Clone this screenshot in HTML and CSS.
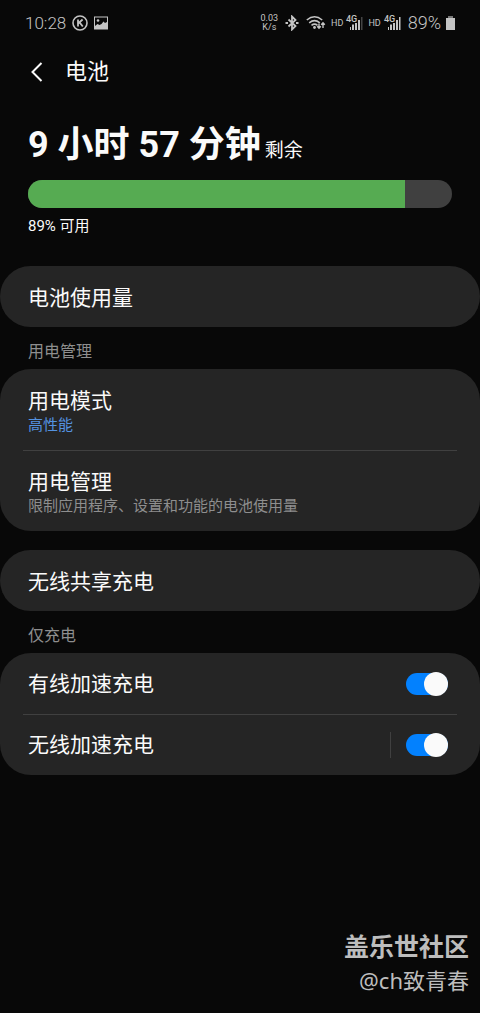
FILE: index.html
```html
<!DOCTYPE html>
<html lang="zh-CN">
<head>
<meta charset="utf-8">
<meta name="viewport" content="width=device-width, initial-scale=1">
<title>电池</title>
<link rel="stylesheet" href="styles.css">
</head>
<body>
<div class="screen">
  <div class="status">
    <div class="status-side">
      <span class="status-text">10:28</span>
      <svg class="icon-k" viewBox="0 0 16 16" aria-hidden="true"><circle cx="8" cy="8" r="7" fill="none" stroke="currentColor" stroke-width="1.6"/><path d="M6 4.5v7M10.6 4.5 6.4 8.2M7.5 7.4l3.3 4.1" fill="none" stroke="currentColor" stroke-width="1.8"/></svg>
      <svg class="icon-image" viewBox="0 0 14 14" aria-hidden="true"><path fill="currentColor" fill-rule="evenodd" d="M0 .5h14v13H0zM1 1.500v8.500l2.500-2 2 1 2-1 2-2.500 1.500 1.500 2-1V1.500z"/><circle cx="4" cy="4.500" r="1.300" fill="currentColor"/></svg>
    </div>
    <div class="status-side indicators">
      <span class="speed"><span>0.03</span><span>K/s</span></span>
      <svg class="icon-bt" viewBox="0 0 14 16" aria-hidden="true"><path d="M3.500 4.500 10.500 11 7 14.500v-13L10.500 5l-7 6.500" fill="none" stroke="currentColor" stroke-width="1.800"/><path d="M.5 8h2.500M11 8h2.500" stroke="currentColor" stroke-width="2"/></svg>
      <svg class="icon-wifi" viewBox="0 0 20 16" aria-hidden="true"><g fill="none" stroke="currentColor" stroke-width="1.600"><path d="M.8 5Q8.500-1.500 16.200 5M3.200 7.800q5.300-4.300 10.600 0M5.500 10.300q3-2.300 6 0"/><path stroke-width="1.400" d="M13 8.500V13M11.200 11.300 13 13.200l1.800-1.900M17 13V7.800M15.200 9.700 17 7.800l1.800 1.900"/></g><circle cx="8.500" cy="12.500" r="1.400" fill="currentColor"/></svg>
      <span class="hd">HD</span>
      <svg class="icon-signal" viewBox="0 0 17 16" aria-hidden="true"><text class="net" x="0" y="7">4G</text><path fill="currentColor" d="M4 12h1v3H4zM6 9.500h2V15H6zM9 8h2v7H9zM12 5h2v10h-2z"/><path fill="#444" d="M15 2h1.500v13H15z"/></svg>
      <span class="hd">HD</span>
      <svg class="icon-signal" viewBox="0 0 17 16" aria-hidden="true"><text class="net" x="0" y="7">4G</text><path fill="currentColor" d="M4 12h1v3H4zM6 9.500h2V15H6zM9 8h2v7H9zM12 5h2v10h-2zM15 2h1.500v13H15z"/></svg>
      <span class="status-text percent">89%</span>
      <svg class="icon-battery" viewBox="0 0 9 14" aria-hidden="true"><path fill="#777" d="M2 0h5v2H2z"/><path fill="currentColor" d="M0 2h9v12H0z"/></svg>
    </div>
  </div>

  <header class="appbar">
    <button class="back" type="button" aria-label="返回"><svg viewBox="0 0 12 20" aria-hidden="true"><path d="M10.500 1 1.500 10l9 9" fill="none" stroke="currentColor" stroke-width="2"/></svg></button>
    <h1 class="page-title">电池</h1>
  </header>

  <main>
    <section class="summary">
      <p class="remaining"><strong class="time">9 小时 57 分钟</strong> <span class="left">剩余</span></p>
      <div class="meter" role="meter" aria-label="电量" aria-valuemin="0" aria-valuemax="100" aria-valuenow="89"><div class="meter-fill" style="width: 89%"></div></div>
      <p class="available">89% 可用</p>
    </section>

    <section class="card"><button class="row" type="button">电池使用量</button></section>

    <h2 class="group">用电管理</h2>
    <section class="card">
      <button class="row tall" type="button"><span>用电模式</span><span class="sub accent">高性能</span></button>
      <button class="row tall" type="button"><span>用电管理</span><span class="sub">限制应用程序、设置和功能的电池使用量</span></button>
    </section>

    <section class="card spaced"><button class="row" type="button">无线共享充电</button></section>

    <h2 class="group">仅充电</h2>
    <section class="card">
      <div class="row switch-row"><label for="wired">有线加速充电</label><input class="switch" id="wired" type="checkbox" role="switch" checked></div>
      <div class="row switch-row"><label for="wireless">无线加速充电</label><span class="split"><input class="switch" id="wireless" type="checkbox" role="switch" checked></span></div>
    </section>
  </main>

  <footer class="credit">
    <p class="community">盖乐世社区</p>
    <p class="author">@ch致青春</p>
  </footer>
</div>
</body>
</html>
```
FILE: styles.css
```css
* { box-sizing: border-box; }
body {
  margin: 0;
  background: #080808;
  color: #fafafa;
  font-family: Roboto, "Noto Sans CJK SC", sans-serif;
}
h1, h2, p { margin: 0; font-weight: 400; }
button { border: 0; padding: 0; background: none; color: inherit; font: inherit; text-align: left; }
svg { display: block; flex: none; }

.screen { min-height: 100vh; display: flex; flex-direction: column; }

.status {
  display: flex;
  justify-content: space-between;
  padding: 11px 25px 0;
  color: #c4c4c4;
}
.status-side { display: flex; align-items: center; height: 24px; gap: 6px; }
.indicators { gap: 5px; }
.status-text { font-size: 17px; font-weight: 300; line-height: 24px; }
.icon-k { width: 16px; height: 16px; }
.icon-image { width: 14px; height: 14px; }
.speed { display: flex; flex-direction: column; align-items: center; font-size: 9px; line-height: 9px; }
.icon-bt { width: 14px; height: 16px; margin: 0 2px; }
.icon-wifi { width: 20px; height: 16px; }
.hd { font-size: 9px; margin-right: -2px; }
.icon-signal { width: 17px; height: 16px; overflow: visible; }
.net { font-size: 9px; font-weight: 500; fill: currentColor; }
.percent { margin-left: 2px; font-size: 18px; }
.icon-battery { width: 9px; height: 14px; }

.appbar { display: flex; align-items: center; height: 74px; padding: 0 28px; gap: 21px; }
.back { width: 16px; padding-left: 3px; }
.back svg { width: 12px; height: 20px; }
.page-title { font-size: 22px; line-height: 32px; }

.summary { padding: 8px 28px 0; }
.remaining { line-height: 56px; white-space: nowrap; }
.time { font-size: 36px; font-weight: 700; }
.left { font-size: 19px; }
.meter { height: 28px; border-radius: 14px; background: #404040; overflow: hidden; }
.meter-fill { height: 100%; background: #56ab52; }
.available { margin-top: 6px; font-size: 15px; line-height: 24px; }

.summary + .card { margin-top: 28px; }
.card { border-radius: 31px; background: #252525; }
.spaced { margin-top: 19px; }
.row {
  display: flex;
  align-items: center;
  width: 100%;
  height: 61px;
  padding: 3px 28px 0;
  font-size: 21px;
  line-height: 30px;
}
.tall { flex-direction: column; align-items: flex-start; justify-content: center; height: 81px; padding-top: 0; }
.row + .row {
  background: linear-gradient(#404040, #404040) 50% 0 / calc(100% - 46px) 1px no-repeat;
}
.sub { font-size: 15px; line-height: 18px; color: #8e8e8e; }
.accent { color: #5492e0; }
.group { padding: 4px 28px 0; height: 42px; font-size: 16px; line-height: 42px; color: #8e8e8e; }

.switch-row { justify-content: space-between; padding: 0 32px 0 28px; }
.split { display: flex; align-items: center; height: 26px; padding-left: 15px; border-left: 1px solid #404040; }
.switch {
  appearance: none;
  display: flex;
  align-items: center;
  justify-content: flex-end;
  width: 42px;
  height: 22px;
  margin: 0;
  background: #0381fe;
  border-radius: 11px;
}
.switch::before { content: ""; flex: none; width: 24px; height: 24px; border-radius: 50%; background: #fafafa; }
.switch:not(:checked) { justify-content: flex-start; filter: grayscale(1); }

.credit { margin-top: auto; padding: 0 11px 17px; text-align: right; color: #bdbdbd; }
.community { font-size: 25px; font-weight: 700; line-height: 33px; }
.author { font-family: "Noto Sans", "Noto Sans CJK SC", sans-serif; font-size: 22px; line-height: 32px; }
```
